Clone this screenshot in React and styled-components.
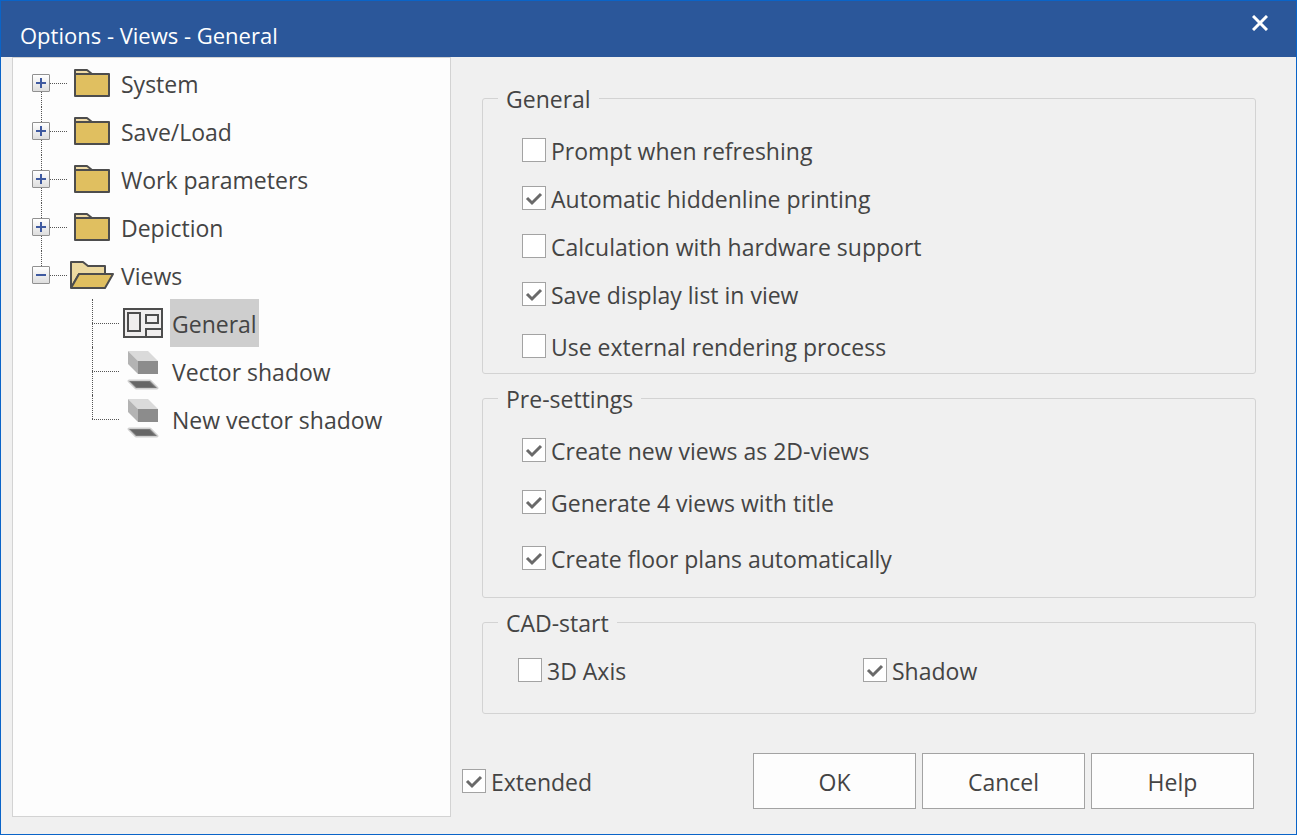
import React, { useState } from 'react'
import styled, { createGlobalStyle } from 'styled-components'

const sections = [
    { name: 'System' },
    { name: 'Save/Load' },
    { name: 'Work parameters' },
    { name: 'Depiction' },
    { name: 'Views', open: true },
]

const viewPages = [
    { name: 'General', icon: 'layout' },
    { name: 'Vector shadow', icon: 'shadow' },
    { name: 'New vector shadow', icon: 'shadow' },
]

function FolderIcon() {
    return (
        <svg width="44" height="32" viewBox="0 0 44 32" aria-hidden="true">
            <path d="M5 7V3H17L22 7" fill="#f0dba6" stroke="#4d4d4d" strokeWidth="2" strokeLinejoin="round" />
            <path d="M5 7H39V29H5Z" fill="#e0bf60" stroke="#4d4d4d" strokeWidth="2" strokeLinejoin="round" />
        </svg>
    )
}

function OpenFolderIcon() {
    return (
        <svg width="44" height="32" viewBox="0 0 44 32" aria-hidden="true">
            <path d="M1 29V3H13L18 7H35V15H9L1 29" fill="#ecd9a0" stroke="#4d4d4d" strokeWidth="2" strokeLinejoin="round" />
            <path d="M9 15H43L35 29H1Z" fill="#e0bf60" stroke="#4d4d4d" strokeWidth="2" strokeLinejoin="round" />
        </svg>
    )
}

function LayoutIcon() {
    return (
        <svg width="40" height="30" viewBox="0 0 40 30" aria-hidden="true">
            <g fill="#f0eeee" stroke="#4d4d4d" strokeWidth="2">
                <path d="M1 1H39V29H1Z" />
                <path d="M5 5H17V23H5Z" />
                <path d="M23 7H35V15H23Z" />
                <path d="M39 21H23V29" fill="none" />
            </g>
        </svg>
    )
}

function ShadowIcon() {
    return (
        <svg width="40" height="40" viewBox="0 0 40 40" aria-hidden="true">
            <path d="M5 0H25L35 10H15Z" fill="#dadada" />
            <path d="M5 0L15 10V23L5 13Z" fill="#b3b3b3" />
            <path d="M15 10H35V23H15Z" fill="#8c8c8c" />
            <path d="M6 30H27L34 37H13Z" fill="#6b6b6b" stroke="#8c8c8c" strokeOpacity="0.4" strokeWidth="3" strokeLinejoin="round" />
            <path d="M8 31H26L31 36H14Z" fill="#666" />
        </svg>
    )
}

function Option({ id, label, checked = false, space = 24 }) {
    const [on, setOn] = useState(checked)
    return (
        <OptionRow $space={space}>
            <CheckWrap>
                <CheckInput id={id} type="checkbox" checked={on} onChange={() => setOn(!on)} />
                {on && (
                    <CheckMark viewBox="0 0 24 24" aria-hidden="true">
                        <path d="M5 12L10 17L19 8" fill="none" stroke="#6a6a6a" strokeWidth="3" />
                    </CheckMark>
                )}
            </CheckWrap>
            <OptionLabel htmlFor={id}>{label}</OptionLabel>
        </OptionRow>
    )
}

function App() {
    const [selected, setSelected] = useState('General')

    return (
        <Dialog>
            <GlobalStyle />
            <TitleBar>
                <Title>Options - Views - General</Title>
                <CloseButton type="button" aria-label="Close">
                    <svg width="16" height="16" viewBox="0 0 16 16" aria-hidden="true">
                        <path d="M1 1L15 15M15 1L1 15" stroke="#fff" strokeWidth="3" />
                    </svg>
                </CloseButton>
            </TitleBar>
            <Body>
                <Tree>
                    {sections.map((section, i) => (
                        <TreeItem key={section.name}>
                            <Rail>
                                <RailLine $hidden={i === 0} />
                                <Expander type="button" aria-label={section.name} aria-expanded={!!section.open}>
                                    <svg width="10" height="10" viewBox="0 0 10 10" aria-hidden="true">
                                        <path d={section.open ? 'M0 5H10' : 'M0 5H10M5 0V10'} stroke="#3f5aa0" strokeWidth="2" />
                                    </svg>
                                </Expander>
                                <RailLine $hidden={i === sections.length - 1} />
                            </Rail>
                            <Dash />
                            <FolderCell>{section.open ? <OpenFolderIcon /> : <FolderIcon />}</FolderCell>
                            <SectionName>{section.name}</SectionName>
                        </TreeItem>
                    ))}
                    <SubTree>
                        {viewPages.map((page, i) => (
                            <TreeItem key={page.name}>
                                <Elbow>
                                    <ElbowTop />
                                    <ElbowBottom $last={i === viewPages.length - 1} />
                                </Elbow>
                                <PageIcon>{page.icon === 'layout' ? <LayoutIcon /> : <ShadowIcon />}</PageIcon>
                                <PageButton
                                    type="button"
                                    $active={selected === page.name}
                                    onClick={() => setSelected(page.name)}
                                >
                                    {page.name}
                                </PageButton>
                            </TreeItem>
                        ))}
                    </SubTree>
                </Tree>
                <Content>
                    <Group>
                        <Legend>General</Legend>
                        <OptionList>
                            <Option id="prompt" label="Prompt when refreshing" />
                            <Option id="hiddenline" label="Automatic hiddenline printing" checked />
                            <Option id="hardware" label="Calculation with hardware support" />
                            <Option id="displaylist" label="Save display list in view" checked space={28} />
                            <Option id="external" label="Use external rendering process" space={15} />
                        </OptionList>
                    </Group>
                    <Group>
                        <Legend>Pre-settings</Legend>
                        <OptionList>
                            <Option id="views2d" label="Create new views as 2D-views" checked space={28} />
                            <Option id="views4" label="Generate 4 views with title" checked space={32} />
                            <Option id="floorplans" label="Create floor plans automatically" checked space={27} />
                        </OptionList>
                    </Group>
                    <Group>
                        <Legend>CAD-start</Legend>
                        <OptionColumns>
                            <Option id="axis" label="3D Axis" space={31} />
                            <Option id="shadow" label="Shadow" checked space={31} />
                        </OptionColumns>
                    </Group>
                    <Footer>
                        <Option id="extended" label="Extended" checked space={0} />
                        <Buttons>
                            <Button type="button">OK</Button>
                            <Button type="button">Cancel</Button>
                            <Button type="button">Help</Button>
                        </Buttons>
                    </Footer>
                </Content>
            </Body>
        </Dialog>
    )
}

const GlobalStyle = createGlobalStyle`
    * {
        box-sizing: border-box;
    }
    body {
        margin: 0;
        font-family: 'Open Sans', 'Noto Sans', sans-serif;
        font-size: 23px;
        line-height: 32px;
        color: #444;
    }
    button {
        font: inherit;
        color: inherit;
        cursor: pointer;
    }
    svg {
        display: block;
    }
`;
const Dialog = styled.div`
    min-height: 100vh;
    display: flex;
    flex-direction: column;
    background: #f0f0f0;
    border: 1px solid #0a64c8;
`;
const TitleBar = styled.header`
    height: 56px;
    padding: 0 14px 0 19px;
    display: flex;
    justify-content: space-between;
    background: #2b579a;
    color: #fff;
`;
const Title = styled.h1`
    margin: 0;
    padding-top: 18px;
    font-size: 22px;
    font-weight: 400;
`;
const CloseButton = styled.button`
    width: 44px;
    height: 44px;
    padding: 0;
    border: 0;
    background: transparent;
    display: flex;
    align-items: center;
    justify-content: center;
`;
const Body = styled.div`
    flex: 1;
    display: flex;
`;
const Tree = styled.ul`
    flex: 0 0 439px;
    margin: 0 0 17px 11px;
    padding: 1px 0 0 19px;
    list-style: none;
    background: #fdfdfd;
    border: 1px solid #d3d3d3;
`;
const SubTree = styled.div`
    padding-left: 60px;
`;
const TreeItem = styled.li`
    height: 48px;
    display: flex;
    white-space: nowrap;
`;
const Rail = styled.div`
    width: 18px;
    display: flex;
    flex-direction: column;
`;
const RailLine = styled.div`
    flex: 1;
    margin-left: 9px;
    border-left: 1px dotted ${({ $hidden }) => ($hidden ? 'transparent' : '#555')};
`;
const Expander = styled.button`
    width: 18px;
    height: 18px;
    padding: 0;
    display: flex;
    align-items: center;
    justify-content: center;
    border: 1px solid #919191;
    border-radius: 1px;
    background: linear-gradient(#fff, #dedede);
`;
const Dash = styled.div`
    width: 17px;
    margin-top: 24px;
    border-top: 1px dotted #555;
`;
const FolderCell = styled.div`
    width: 44px;
    margin: 8px 6px 0 3px;
`;
const SectionName = styled.span`
    padding: 1px 1px 0;
    line-height: 48px;
`;
const Elbow = styled.div`
    width: 27px;
`;
const ElbowTop = styled.div`
    height: 24px;
    border-left: 1px dotted #555;
`;
const ElbowBottom = styled.div`
    height: 24px;
    border-top: 1px dotted #555;
    border-left: ${({ $last }) => ($last ? '0' : '1px dotted #555')};
`;
const PageIcon = styled.div`
    width: 40px;
    margin: 0 7px 0 4px;
    display: flex;
    align-items: center;
`;
const PageButton = styled.button`
    height: 48px;
    padding: 2px 2px 0;
    border: 0;
    background: ${({ $active }) => ($active ? '#cecece' : 'transparent')};
`;
const Content = styled.main`
    flex: 1;
    padding: 25px 40px 25px 31px;
    display: flex;
    flex-direction: column;
    gap: 8px;
`;
const Group = styled.fieldset`
    margin: 0;
    padding: 0;
    min-width: 0;
    border: 1px solid #d3d3d3;
    border-radius: 3px;
`;
const Legend = styled.legend`
    margin-left: 15px;
    padding: 1px 8px 0;
`;
const OptionList = styled.div`
    padding: 23px 0 0 39px;
`;
const OptionColumns = styled.div`
    padding: 19px 0 0 35px;
    display: grid;
    grid-template-columns: 345px 1fr;
`;
const OptionRow = styled.div`
    display: flex;
    align-items: center;
    height: 24px;
    margin-bottom: ${({ $space }) => $space}px;
`;
const CheckWrap = styled.span`
    display: grid;
    width: 24px;
    height: 24px;
`;
const CheckInput = styled.input`
    grid-area: 1 / 1;
    appearance: none;
    width: 24px;
    height: 24px;
    margin: 0;
    background: #fff;
    border: 1px solid #a3a3a3;
`;
const CheckMark = styled.svg`
    grid-area: 1 / 1;
    width: 24px;
    height: 24px;
    pointer-events: none;
`;
const OptionLabel = styled.label`
    padding: 2px 0 0 5px;
`;
const Footer = styled.footer`
    margin: auto 2px 0 -20px;
    display: flex;
    align-items: center;
    justify-content: space-between;
`;
const Buttons = styled.div`
    display: flex;
    gap: 6px;
`;
const Button = styled.button`
    width: 163px;
    height: 56px;
    padding: 2px 0 0;
    background: #fdfdfd;
    border: 1px solid #a3a3a3;
`;

export default App
